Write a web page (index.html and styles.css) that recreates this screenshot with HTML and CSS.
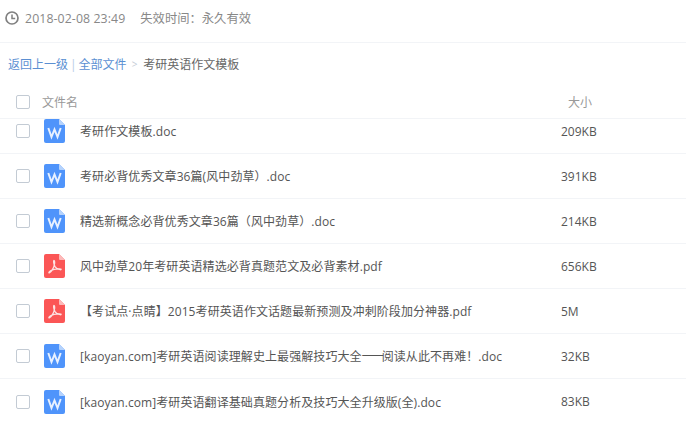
FILE: index.html
```html
<!DOCTYPE html>
<html lang="zh">
<head>
<meta charset="utf-8">
<title>考研英语作文模板</title>
<link rel="stylesheet" href="styles.css">
</head>
<body>
<svg class="defs" width="0" height="0" aria-hidden="true">
  <symbol id="word" viewBox="0 0 21 24">
    <path d="M2 0H15L21 6V22a2 2 0 0 1-2 2H2a2 2 0 0 1-2-2V2a2 2 0 0 1 2-2Z" fill="#4f94fb"/>
    <path d="M15 0L21 6H16a1 1 0 0 1-1-1Z" fill="#b5d3fd"/>
    <path d="M4.3 9L7.5 18L10.5 10.5L13.5 18L16.7 9" fill="none" stroke="#e8f1ff" stroke-width="2"/>
  </symbol>
  <symbol id="pdf" viewBox="0 0 21 24">
    <path d="M2 0H15L21 6V22a2 2 0 0 1-2 2H2a2 2 0 0 1-2-2V2a2 2 0 0 1 2-2Z" fill="#fb5656"/>
    <path d="M15 0L21 6H16a1 1 0 0 1-1-1Z" fill="#fdb9b9"/>
    <path d="M9.8 6.5C9.2 6.7 9.8 10 10.8 12.2C11.8 14.2 14 15.2 16.2 15.7C17.4 15.9 17.4 15 16.2 14.9C13.5 14.6 9.5 15 6.5 16.8C4.8 17.9 4.5 19 5.4 18.8C7 18.4 10 14 10.6 9.5C10.8 7.5 10.4 6.3 9.8 6.5Z" fill="none" stroke="#fde3e3" stroke-width="1.3"/>
  </symbol>
</svg>
<main class="page">
  <div class="meta">
    <svg class="clock" viewBox="0 0 14 14" width="14" height="14" aria-hidden="true">
      <circle cx="7" cy="7" r="6" fill="none" stroke="#808080" stroke-width="1.7"/>
      <path d="M7 3.4V7.6H10.2" fill="none" stroke="#808080" stroke-width="1.5"/>
    </svg>
    <span class="date">2018-02-08 23:49</span>
    <span class="expire">失效时间：永久有效</span>
  </div>
  <nav class="crumbs">
    <a class="link">返回上一级</a><span class="bar">|</span><a class="link">全部文件</a><span class="sep">&gt;</span><span class="current">考研英语作文模板</span>
  </nav>
  <div class="head">
    <span class="check"></span>
    <span class="head-name">文件名</span>
    <span class="head-size">大小</span>
  </div>
  <ul class="list">
    <li class="row"><span class="check"></span><svg class="ficon"><use href="#word"/></svg><span class="name">考研作文模板.doc</span><span class="size">209KB</span></li>
    <li class="row"><span class="check"></span><svg class="ficon"><use href="#word"/></svg><span class="name">考研必背优秀文章36篇(风中劲草）.doc</span><span class="size">391KB</span></li>
    <li class="row"><span class="check"></span><svg class="ficon"><use href="#word"/></svg><span class="name">精选新概念必背优秀文章36篇（风中劲草）.doc</span><span class="size">214KB</span></li>
    <li class="row"><span class="check"></span><svg class="ficon"><use href="#pdf"/></svg><span class="name">风中劲草20年考研英语精选必背真题范文及必背素材.pdf</span><span class="size">656KB</span></li>
    <li class="row"><span class="check"></span><svg class="ficon"><use href="#pdf"/></svg><span class="name">【考试点·点睛】2015考研英语作文话题最新预测及冲刺阶段加分神器.pdf</span><span class="size">5M</span></li>
    <li class="row"><span class="check"></span><svg class="ficon"><use href="#word"/></svg><span class="name">[kaoyan.com]考研英语阅读理解史上最强解技巧大全<span class="dash">一一</span>阅读从此不再难！.doc</span><span class="size">32KB</span></li>
    <li class="row"><span class="check"></span><svg class="ficon"><use href="#word"/></svg><span class="name">[kaoyan.com]考研英语翻译基础真题分析及技巧大全升级版(全).doc</span><span class="size">83KB</span></li>
  </ul>
</main>
</body>
</html>
```
FILE: styles.css
```css
* { box-sizing: border-box; }
html, body { margin: 0; padding: 0; background: #fff; }
body {
  font-family: "Open Sans", "Noto Sans CJK SC", sans-serif;
  font-size: 12px;
  color: #555;
  overflow: hidden;
}
.defs { position: absolute; }
.page { width: 686px; height: 442px; overflow: hidden; }
.meta {
  height: 43px;
  padding: 0 0 6px 5px;
  display: flex;
  align-items: center;
  border-bottom: 1px solid #f2f4f7;
  color: #888;
  font-size: 12.3px;
}
.clock { margin-right: 6px; }
.date { margin-right: 15px; letter-spacing: .1px; }
.crumbs {
  height: 42px;
  padding: 0 0 0 8px;
  display: flex;
  align-items: center;
}
.link { color: #5b8fd2; }
.bar { color: #b7cbe6; margin: 0 2px; }
.sep { color: #c4ccd6; margin: 0 6px 0 5px; font-size: 10px; }
.current { color: #666; }
.head {
  height: 34px;
  position: relative;
  z-index: 1;
  display: flex;
  align-items: center;
  padding: 0 0 0 16px;
  border-bottom: 1px solid #f2f4f7;
  background: #fff;
  color: #999;
}
.head-name { margin-left: 12px; width: 526px; }
.list {
  list-style: none;
  margin: -10px 0 0;
  padding: 0;
}
.row {
  height: 45px;
  display: flex;
  align-items: center;
  padding-left: 16px;
  border-bottom: 1px solid #f2f4f7;
}
.row:last-child { border-bottom: 0; }
.check {
  flex: none;
  width: 14px;
  height: 14px;
  border: 1px solid #c3cbd4;
  border-radius: 2px;
  background: #fff;
}
.ficon { flex: none; width: 21px; height: 24px; margin-left: 14px; }
.name { width: 481px; margin-left: 15px; color: #555; white-space: nowrap; letter-spacing: .08px; }
.dash { letter-spacing: -2px; }
```
